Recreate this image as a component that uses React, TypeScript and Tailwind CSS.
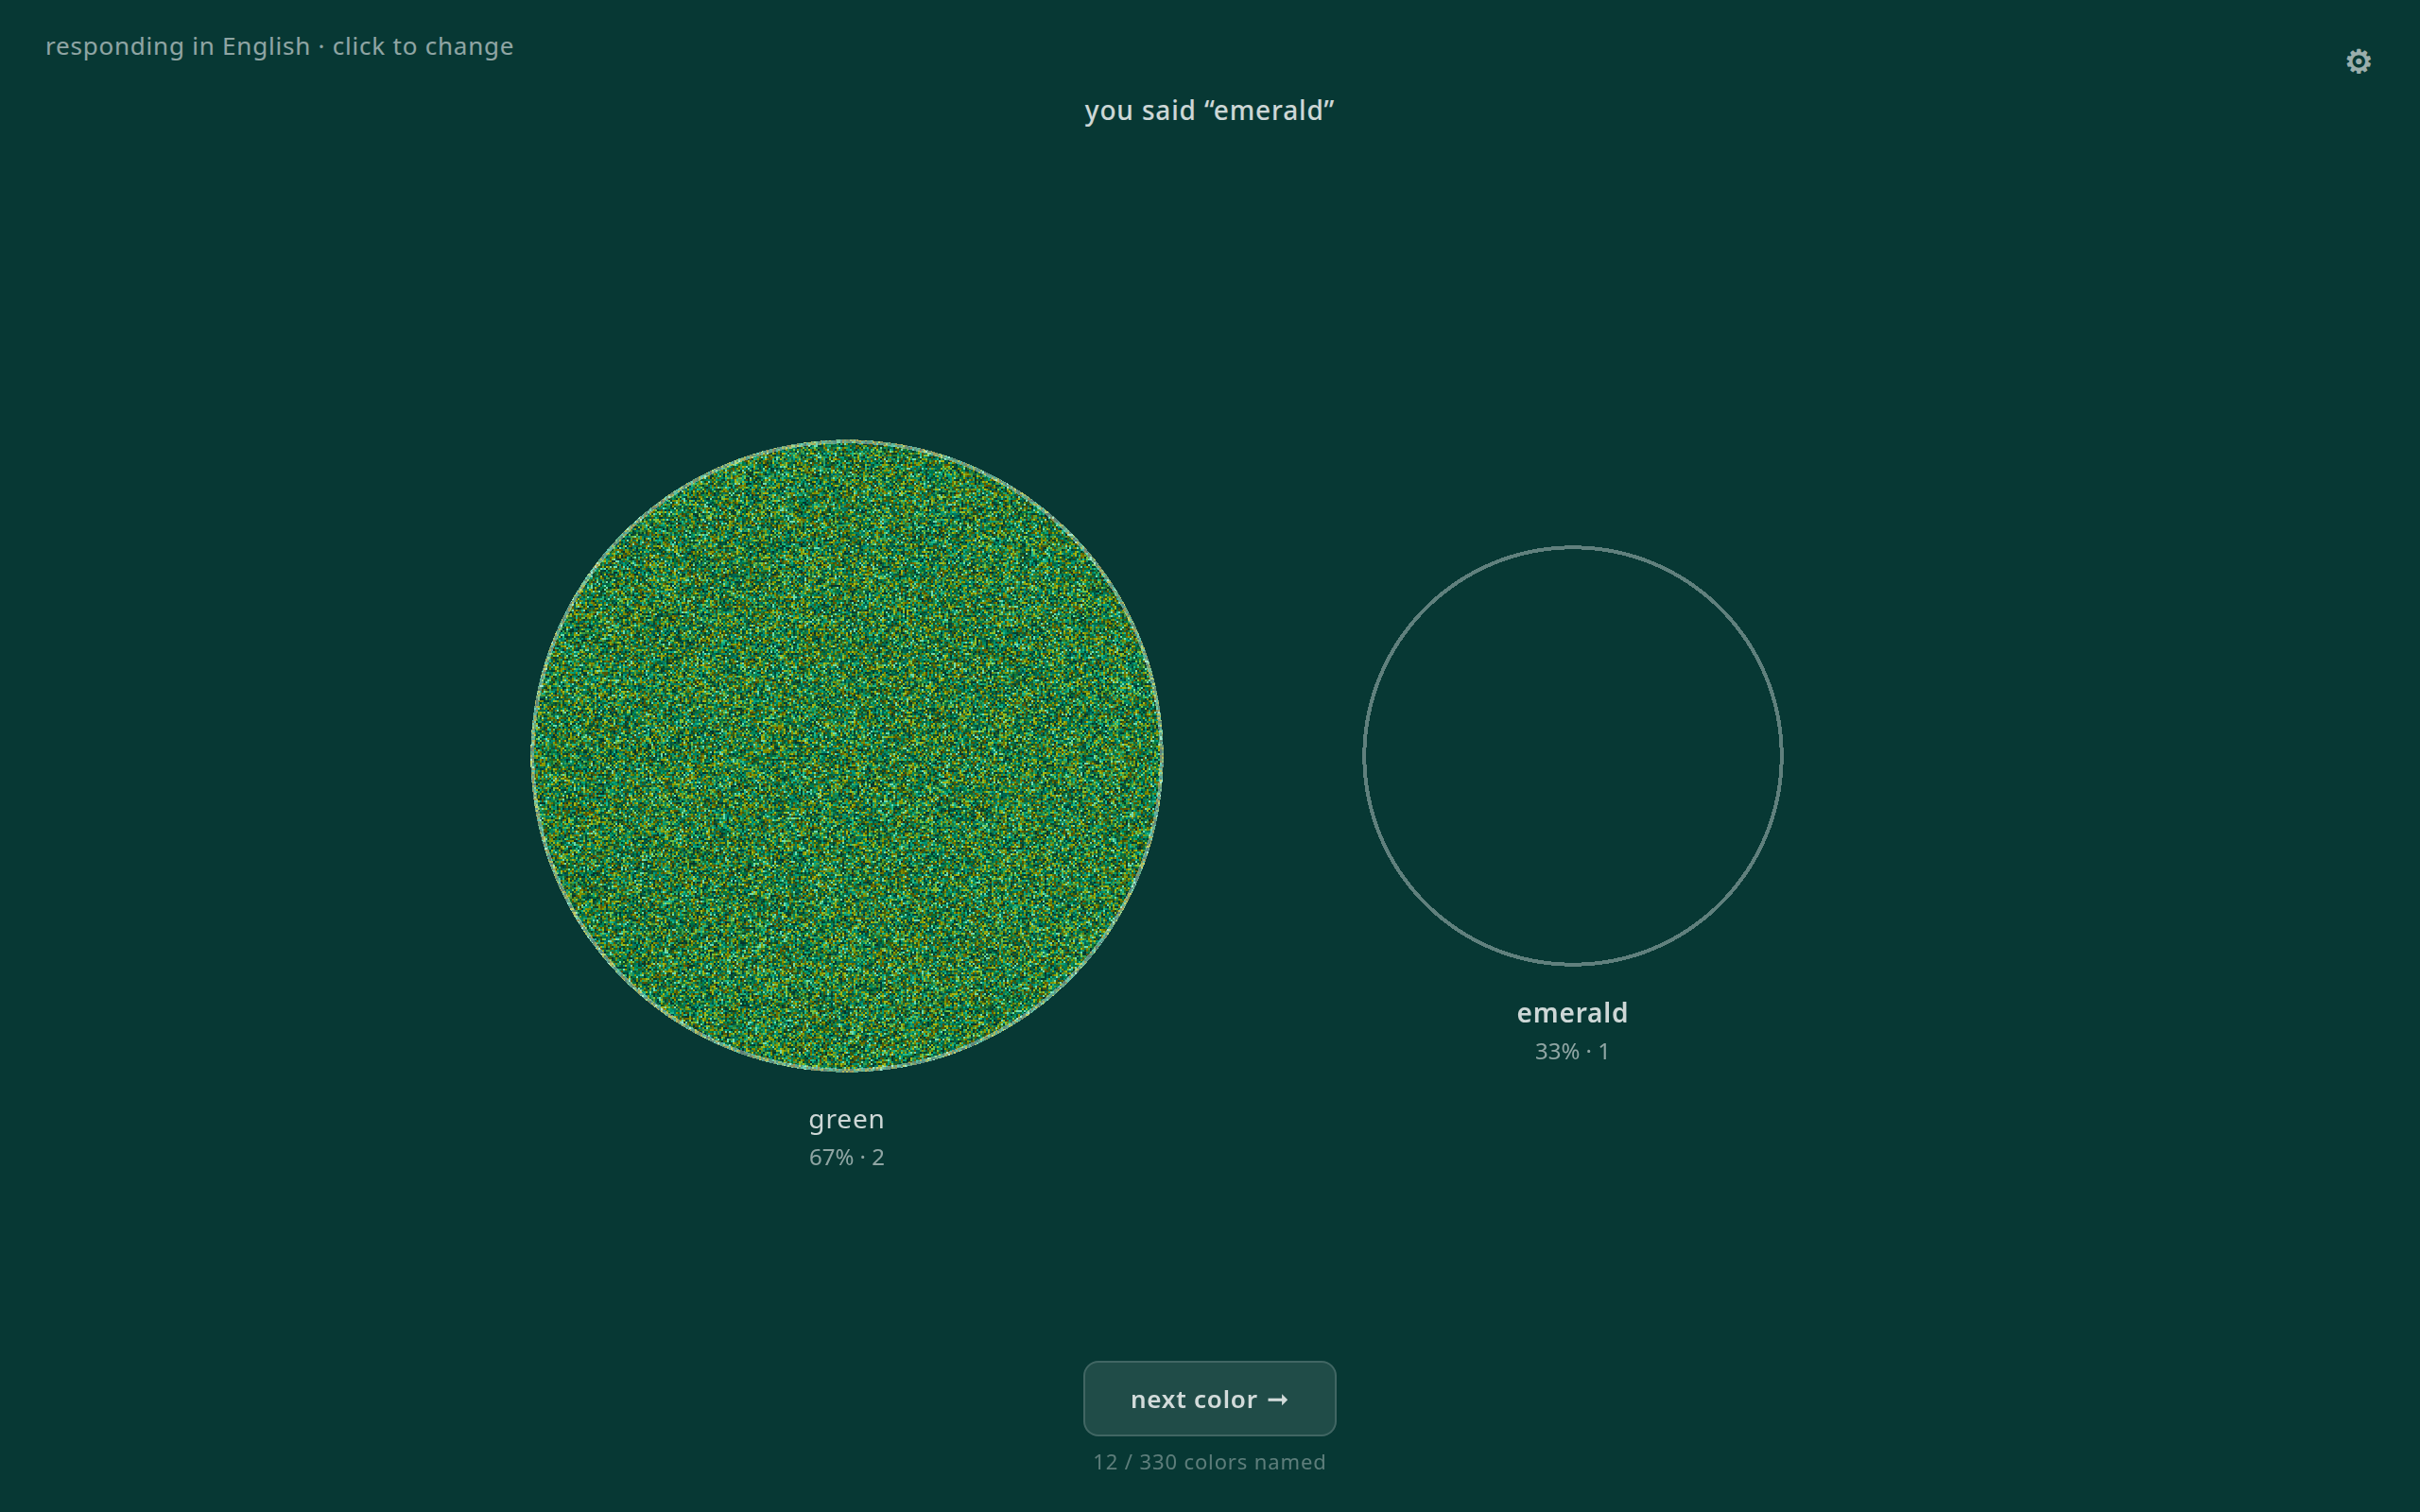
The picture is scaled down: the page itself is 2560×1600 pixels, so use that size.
import { useEffect, useRef } from 'react';

const PALETTE: [number, number, number][] = [
  [0, 62, 44], [0, 88, 62], [0, 106, 74], [0, 132, 90], [0, 160, 124],
  [0, 70, 58], [20, 74, 34], [30, 100, 34], [40, 126, 50], [84, 156, 50],
  [96, 84, 0], [112, 112, 0], [140, 156, 0], [166, 184, 20], [30, 184, 140],
  [110, 220, 176], [0, 120, 104], [0, 146, 110], [6, 52, 44], [0, 98, 80],
  [54, 160, 84], [116, 196, 70], [0, 122, 60], [70, 88, 10], [128, 140, 0],
];

const BACKGROUND = [7, 56, 52];
const RING_WIDTH = 4;
const RING_ALPHA = 0.36;

function makeRandom(seed: number) {
  let s = seed;
  return () => {
    s = (s + 0x6d2b79f5) | 0;
    let t = Math.imul(s ^ (s >>> 15), 1 | s);
    t = (t + Math.imul(t ^ (t >>> 7), 61 | t)) ^ t;
    return ((t ^ (t >>> 14)) >>> 0) / 4294967296;
  };
}

type DiscProps = { size: number; noisy: boolean; label: string };

function Disc({ size, noisy, label }: DiscProps) {
  const ref = useRef<HTMLCanvasElement>(null);
  useEffect(() => {
    const ctx = ref.current?.getContext('2d');
    if (!ctx) return;
    const random = makeRandom(7);
    const image = ctx.createImageData(size, size);
    const cells = Math.ceil(size / 2);
    const grid = Array.from({ length: cells * cells }, () => PALETTE[Math.floor(random() * PALETTE.length)]);
    const centre = size / 2;
    const radius = centre - 0.3;
    for (let y = 0; y < size; y++) {
      for (let x = 0; x < size; x++) {
        const d = Math.hypot(x + 0.5 - centre, y + 0.5 - centre);
        if (d > radius) continue;
        const ring = d > radius - RING_WIDTH;
        if (!ring && !noisy) continue;
        const base = noisy ? grid[(y >> 1) * cells + (x >> 1)] : BACKGROUND;
        const k = ring ? RING_ALPHA : 0;
        const i = (y * size + x) * 4;
        for (let c = 0; c < 3; c++) image.data[i + c] = base[c] + (255 - base[c]) * k;
        image.data[i + 3] = 255;
      }
    }
    ctx.putImageData(image, 0, 0);
  }, [size, noisy]);
  return <canvas ref={ref} width={size} height={size} role="img" aria-label={label} className="block" />;
}

type TermProps = { name: string; share: string; size: number; noisy?: boolean; chosen?: boolean };

function Term({ name, share, size, noisy = false, chosen = false }: TermProps) {
  return (
    <figure className="flex flex-col items-center pt-27">
      <Disc size={size} noisy={noisy} label={name} />
      <figcaption className="mt-6.5 text-center">
        <div className={`text-[28px] leading-11 tracking-[0.03em] ${chosen ? 'font-semibold' : 'font-normal'}`}>{name}</div>
        <div className="text-2xl leading-9.5 text-white/55">{share}</div>
      </figcaption>
    </figure>
  );
}

export default function App() {
  return (
    <main className="flex min-h-screen flex-col bg-[#073834] font-['Noto_Sans',sans-serif] text-white/80">
      <header className="pt-8 pb-6">
        <div className="flex items-start justify-between pr-[50px] pl-12">
          <button type="button" className="text-[26px] leading-8 tracking-[0.03em] text-white/55">
            responding in English · click to change
          </button>
          <button type="button" aria-label="Settings" className="mt-3.5 text-[34px] font-semibold leading-9 text-white/60">⚙</button>
        </div>
        <h1 className="mt-3.5 text-center text-[28px] font-medium leading-10 tracking-[0.03em]">you said “emerald”</h1>
      </header>
      <section className="mx-auto grid w-3/5 flex-1 grid-cols-2 items-center">
        <Term name="green" share="67% · 2" size={670} noisy />
        <Term name="emerald" share="33% · 1" size={446} chosen />
      </section>
      <footer className="flex flex-col items-center gap-3 pb-10">
        <button type="button" className="rounded-2xl border-2 border-white/15 bg-white/10 px-12 py-5 text-[26px] font-semibold leading-9 tracking-[0.03em]">
          next color <span className="ml-0.5 text-[28px] font-medium leading-none">➞</span>
        </button>
        <p className="text-[22px] leading-7 tracking-[0.04em] text-white/35">12 / 330 colors named</p>
      </footer>
    </main>
  );
}
